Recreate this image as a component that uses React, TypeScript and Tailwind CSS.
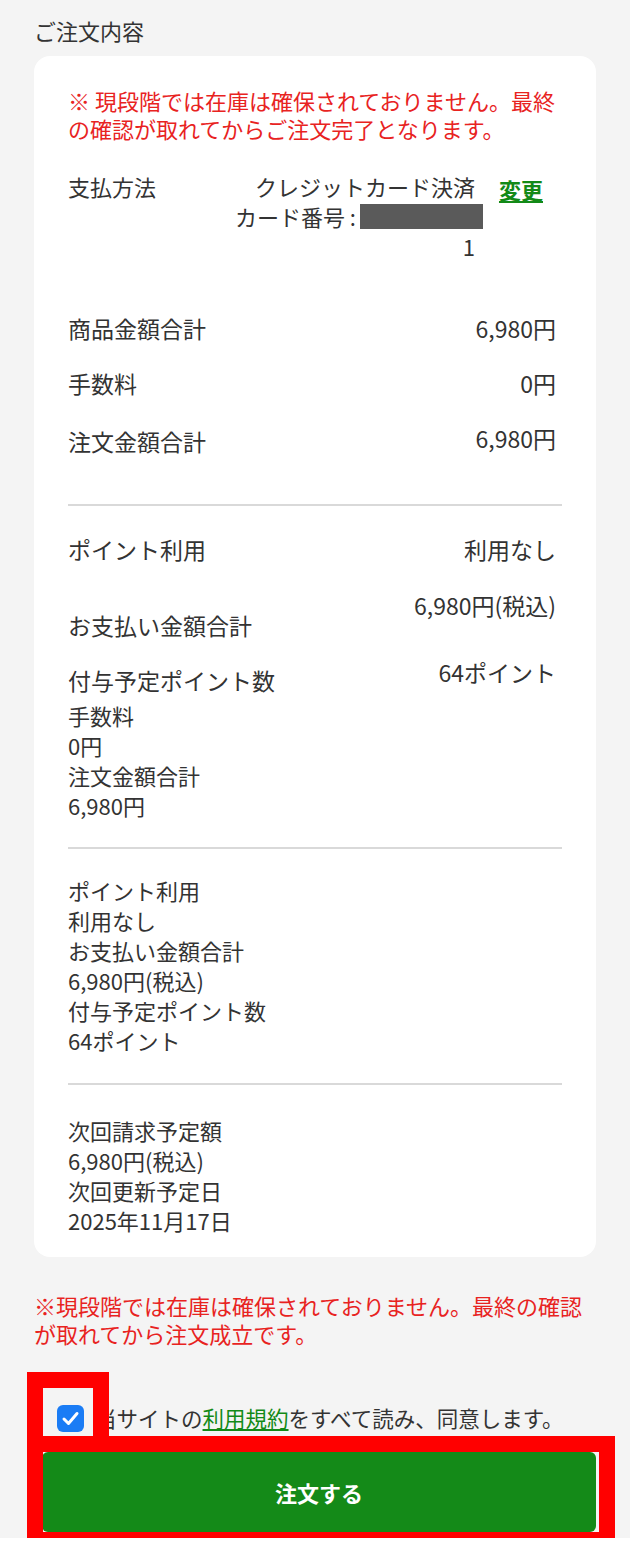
import React from 'react'

const Row = ({ label, value, labelPad = 0, className = '' }: { label: string; value: string; labelPad?: number; className?: string }) => (
  <div className={`flex items-start justify-between text-[23px] ${className}`}>
    <span className={labelPad === 20 ? 'pt-[20px]' : labelPad === 8 ? 'pt-[8px]' : labelPad === 3 ? 'pt-[3px]' : ''}>{label}</span>
    <span className="pr-[6px] text-right">{value}</span>
  </div>
)

const Divider = ({ className = '' }: { className?: string }) => <div className={`h-[2px] bg-[#d9d9d9] ${className}`} />

export default function App() {
  return (
    <div className="relative h-[1538px] bg-[#f4f4f4] px-[34px] pt-[15px] font-['Noto_Sans_CJK_JP','Noto_Sans',sans-serif] text-[#333333]">
      <h2 className="text-[22px] leading-[30px]">ご注文内容</h2>

      <div className="mt-[11px] rounded-[16px] bg-white px-[34px] pt-[30px] pb-[22px] text-[22px] leading-[30px]">
        <p className="leading-[28px] text-[#e8231f]">
          ※ 現段階では在庫は確保されておりません。最終の確認が取れてからご注文完了となります。
        </p>

        {/* 支払方法 */}
        <div className="mt-[29px] flex items-start">
          <div className="flex-1">支払方法</div>
          <div className="text-right">
            <div className="pr-[8px]">クレジットカード決済</div>
            <div className="flex items-center justify-end">
              カード番号 :<span className="ml-[4px] inline-block h-[25px] w-[123px] bg-[#5a5a5a]" />
            </div>
            <div className="pr-[8px]">1</div>
          </div>
          <a className="mt-[3px] mr-[19px] ml-[16px] font-bold text-[#138a17] underline underline-offset-2">変更</a>
        </div>

        <Row className="mt-[52px]" label="商品金額合計" value="6,980円" />
        <Row className="mt-[25px]" label="手数料" value="0円" />
        <Row className="mt-[25px]" label="注文金額合計" value="6,980円" labelPad={3} />

        <Divider className="mt-[48px]" />

        <Row className="mt-[28px]" label="ポイント利用" value="利用なし" />
        <Row className="mt-[26px]" label="お支払い金額合計" value="6,980円(税込)" labelPad={20} />
        <Row className="mt-[17px]" label="付与予定ポイント数" value="64ポイント" labelPad={8} />
        <div className="mt-[5px]">
          <div>手数料</div>
          <div>0円</div>
          <div>注文金額合計</div>
          <div>6,980円</div>
        </div>

        <Divider className="mt-[27px]" />

        <div className="mt-[26px]">
          <div>ポイント利用</div>
          <div>利用なし</div>
          <div>お支払い金額合計</div>
          <div>6,980円(税込)</div>
          <div>付与予定ポイント数</div>
          <div>64ポイント</div>
        </div>

        <Divider className="mt-[28px]" />

        <div className="mt-[30px]">
          <div>次回請求予定額</div>
          <div>6,980円(税込)</div>
          <div>次回更新予定日</div>
          <div>2025年11月17日</div>
        </div>
      </div>

      <p className="mt-[34px] text-[22px] leading-[28px] text-[#e8231f]">
        ※現段階では在庫は確保されておりません。最終の確認が取れてから注文成立です。
      </p>

      <label className="mt-[56px] ml-[23px] flex h-[30px] items-center gap-[11px] text-[21.5px]">
        <svg width="27" height="27" viewBox="0 0 27 27">
          <rect width="27" height="27" rx="6" fill="#1a7cf5" />
          <path d="M7 14l4.5 4.5L20 8.5" fill="none" stroke="#fff" strokeWidth="3" strokeLinecap="round" strokeLinejoin="round" />
        </svg>
        <span>
          当サイトの<a className="text-[#138a17] underline underline-offset-2">利用規約</a>をすべて読み、同意します。
        </span>
      </label>

      <button className="mt-[19px] ml-[8px] flex h-[80px] w-[554px] items-center justify-center rounded-[6px] bg-[#148a18] text-[22px] font-bold text-white">
        注文する
      </button>

      {/* annotation boxes */}
      <div className="absolute top-[1372px] left-[27px] h-[80px] w-[82px] border-[16px] border-[#ff0000]" />
      <div className="absolute top-[1436px] left-[27px] h-[112px] w-[588px] border-[16px] border-[#ff0000]" />
    </div>
  )
}
